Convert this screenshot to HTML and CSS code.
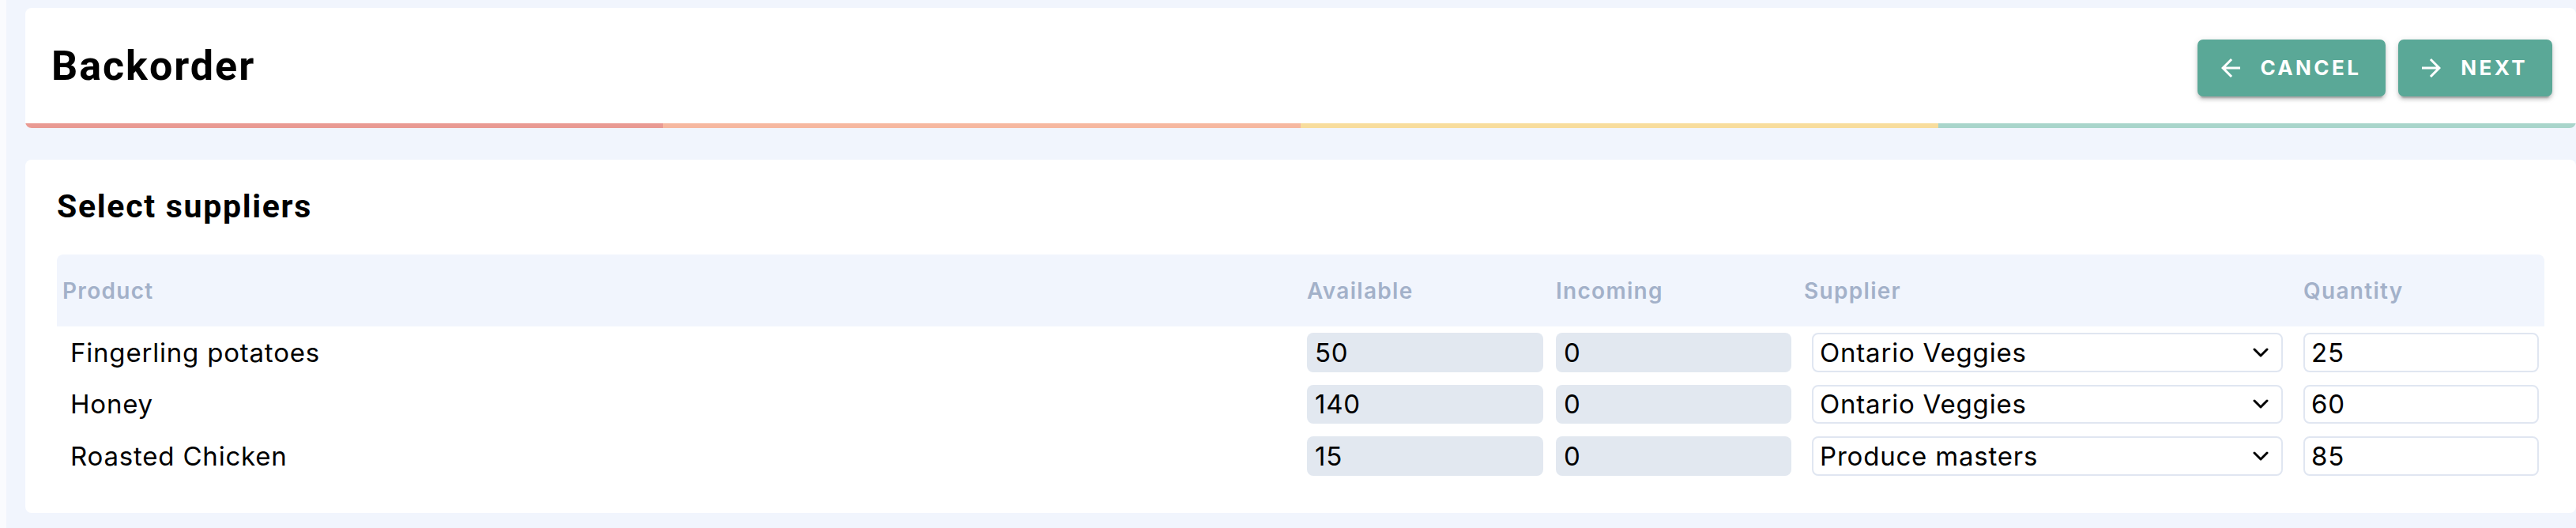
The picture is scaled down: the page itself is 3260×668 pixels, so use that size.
FILE: index.html
```html
<!DOCTYPE html>
<html lang="en">
<head>
<meta charset="utf-8">
<title>Backorder</title>
<link rel="stylesheet" href="styles.css">
</head>
<body>
<div class="page">
  <header class="topcard">
    <div class="topcard-main">
      <h1 class="title">Backorder</h1>
      <div class="actions">
        <button class="btn" type="button">
          <svg class="btn-icon" viewBox="4 4 16 16" width="24" height="24" aria-hidden="true"><path d="M20 11H7.830l5.59-5.59L12 4l-8 8 8 8 1.41-1.41L7.83 13H20v-2z"/></svg>
          <span class="btn-label">Cancel</span>
        </button>
        <button class="btn" type="button">
          <svg class="btn-icon" viewBox="4 4 16 16" width="24" height="24" aria-hidden="true"><path d="M12 4l-1.41 1.41L16.17 11H4v2h12.17l-5.58 5.59L12 20l8-8z"/></svg>
          <span class="btn-label">Next</span>
        </button>
      </div>
    </div>
    <div class="progress">
      <span class="seg seg-red"></span>
      <span class="seg seg-salmon"></span>
      <span class="seg seg-yellow"></span>
      <span class="seg seg-teal"></span>
    </div>
  </header>

  <section class="card">
    <h2 class="card-title">Select suppliers</h2>
    <div class="table">
      <div class="thead grid">
        <div class="th">Product</div>
        <div class="th">Available</div>
        <div class="th">Incoming</div>
        <div class="th">Supplier</div>
        <div class="th">Quantity</div>
      </div>

      <div class="row grid">
        <div class="product">Fingerling potatoes</div>
        <input class="field field-ro" type="text" value="50" readonly>
        <input class="field field-ro" type="text" value="0" readonly>
        <div class="select-wrap">
          <select class="select">
            <option selected>Ontario Veggies</option>
            <option>Produce masters</option>
          </select>
          <svg class="chevron" viewBox="0 0 20 12" width="20" height="12" aria-hidden="true"><polyline points="2,2 10,10 18,2"/></svg>
        </div>
        <input class="field field-edit" type="text" value="25">
      </div>

      <div class="row grid">
        <div class="product">Honey</div>
        <input class="field field-ro" type="text" value="140" readonly>
        <input class="field field-ro" type="text" value="0" readonly>
        <div class="select-wrap">
          <select class="select">
            <option selected>Ontario Veggies</option>
            <option>Produce masters</option>
          </select>
          <svg class="chevron" viewBox="0 0 20 12" width="20" height="12" aria-hidden="true"><polyline points="2,2 10,10 18,2"/></svg>
        </div>
        <input class="field field-edit" type="text" value="60">
      </div>

      <div class="row grid">
        <div class="product">Roasted Chicken</div>
        <input class="field field-ro" type="text" value="15" readonly>
        <input class="field field-ro" type="text" value="0" readonly>
        <div class="select-wrap">
          <select class="select">
            <option>Ontario Veggies</option>
            <option selected>Produce masters</option>
          </select>
          <svg class="chevron" viewBox="0 0 20 12" width="20" height="12" aria-hidden="true"><polyline points="2,2 10,10 18,2"/></svg>
        </div>
        <input class="field field-edit" type="text" value="85">
      </div>
    </div>
  </section>
</div>
</body>
</html>
```

FILE: styles.css
```css
* { box-sizing: border-box; }

html, body {
  margin: 0;
  padding: 0;
}

body {
  background: #fafbfe;
  font-family: "Inter", "Liberation Sans", sans-serif;
  color: #000;
}

.page {
  margin-left: 8px;
  min-height: 668px;
  padding: 10px 0 18px 24px;
  background: #f1f5fd;
}

/* ---------- top card ---------- */
.topcard {
  background: #fff;
  border-radius: 8px;
  overflow: hidden;
}

.topcard-main {
  height: 146px;
  display: flex;
  align-items: center;
  justify-content: space-between;
  padding: 0 30px 0 33px;
}

.title {
  margin: 0;
  font-family: "Roboto", "Liberation Sans", sans-serif;
  font-weight: 700;
  font-size: 52px;
  letter-spacing: 2px;
  line-height: 61px;
}

.actions {
  display: flex;
  gap: 16px;
  margin-top: 5px;
}

.btn {
  height: 72px;
  display: flex;
  align-items: center;
  gap: 25px;
  padding: 0 31px 0 30px;
  border: none;
  border-radius: 7px;
  background: #5aa897;
  color: #fff;
  font-family: "Inter", "Liberation Sans", sans-serif;
  font-weight: 700;
  font-size: 26px;
  letter-spacing: 3.4px;
  text-transform: uppercase;
  box-shadow: 0 6px 2px -4px rgba(0,0,0,0.2), 0 4px 4px 0 rgba(0,0,0,0.14), 0 2px 10px 0 rgba(0,0,0,0.12);
  cursor: pointer;
}

.btn-icon {
  display: block;
  fill: #fff;
  flex: none;
}

.progress {
  display: flex;
  height: 6px;
}

.seg { flex: 1; }
.seg-red { background: #e99a93; }
.seg-salmon { background: #f6b8a0; }
.seg-yellow { background: #f8dd9d; }
.seg-teal { background: #a9d5cb; }

/* ---------- supplier card ---------- */
.card {
  margin-top: 40px;
  background: #fff;
  border-radius: 8px;
  padding: 35px 40px 39px 40px;
}

.card-title {
  margin: 0 0 37px;
  font-family: "Roboto", "Liberation Sans", sans-serif;
  font-weight: 700;
  font-size: 41px;
  letter-spacing: 1.7px;
  line-height: 48px;
}

.grid {
  display: grid;
  grid-template-columns: minmax(0, 1fr) 299px 298px 616px 298px;
  column-gap: 16px;
  padding-left: 7px;
  padding-right: 7px;
  align-items: center;
}

.thead {
  height: 91px;
  background: #f1f5fd;
  border-radius: 8px 8px 0 0;
}

.th {
  font-weight: 600;
  font-size: 28px;
  letter-spacing: 1.3px;
  color: #a3b1c9;
}

.row {
  padding-top: 8px;
  padding-bottom: 8px;
}

.product {
  padding-left: 10px;
  font-size: 33px;
  letter-spacing: 0.8px;
  font-weight: 400;
}

.field {
  display: block;
  width: 100%;
  height: 49.5px;
  padding: 0 8px;
  border: 2px solid transparent;
  border-radius: 8px;
  font-family: "Inter", "Liberation Sans", sans-serif;
  font-size: 33px;
  letter-spacing: 0.8px;
  color: #000;
  outline: none;
}

.field-ro {
  background: #e2e8f0;
}

.field-edit {
  background: #fff;
  border-color: #e0e6f1;
}

.select-wrap {
  margin: 0 10px;
  height: 49.5px;
  display: flex;
  align-items: center;
  padding: 0 16px 0 8px;
  border: 2px solid #e0e6f1;
  border-radius: 8px;
  background: #fff;
}

.select {
  flex: 1;
  min-width: 0;
  appearance: none;
  -webkit-appearance: none;
  border: none;
  background: transparent;
  padding: 0;
  font-family: "Inter", "Liberation Sans", sans-serif;
  font-size: 33px;
  letter-spacing: 0.8px;
  color: #000;
  outline: none;
}

.chevron {
  display: block;
  flex: none;
  fill: none;
  stroke: #000;
  stroke-width: 3;
  stroke-linecap: round;
  stroke-linejoin: round;
}
```
